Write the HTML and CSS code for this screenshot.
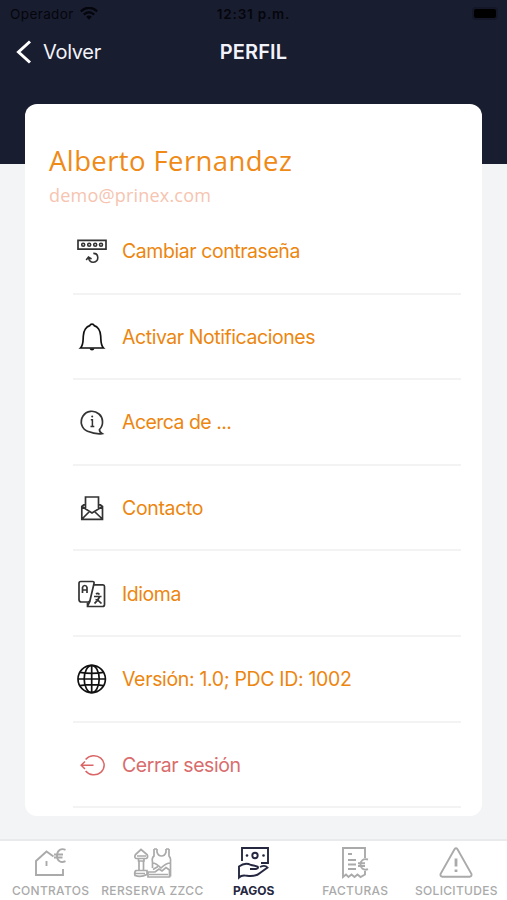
FILE: index.html
```html
<!DOCTYPE html>
<html lang="es">
<head>
<meta charset="utf-8">
<title>Perfil</title>
<link rel="stylesheet" href="styles.css">
</head>
<body>
<div class="app">
  <header class="top">
    <div class="status">
      <div class="carrier"><span>Operador</span>
        <svg width="18" height="13" viewBox="0 0 18 13" fill="none" stroke="#05060c" stroke-width="2.3"><path d="M.8 4.300Q9-2.800 17.200 4.300M3.800 7.600Q9 3 14.200 7.600"/><path d="M6.200 9.800Q9 7.300 11.800 9.800L9 12.700Z" fill="#05060c" stroke="none"/></svg>
      </div>
      <time class="clock">12:31 p.m.</time>
      <span class="battery"></span>
    </div>
    <nav class="nav">
      <a class="back"><svg width="16" height="24" viewBox="0 0 16 24" fill="none" stroke="#fff" stroke-width="3"><path d="M14 1.5L2.500 12L14 22.500"/></svg><span>Volver</span></a>
      <h1 class="title">PERFIL</h1>
    </nav>
  </header>
  <main class="card">
    <h2 class="name">Alberto Fernandez</h2>
    <p class="mail">demo@prinex.com</p>
    <ul class="menu">
      <li class="row"><svg class="icon" viewBox="0 0 32 32"><path d="M2 5.300H30V14.200H2Z" stroke-width="1.700"/><g stroke-width="1.600"><circle cx="7.200" cy="9.800" r="1.500"/><circle cx="13.200" cy="9.800" r="1.500"/><circle cx="19.200" cy="9.800" r="1.500"/><circle cx="25" cy="9.800" r="1.500"/></g><path d="M17.300 18.400C23 18.200 23.500 26.600 17.500 27.200C14.800 27.500 12.800 25.600 12.700 23M10.200 25L12.500 22L15.500 24" stroke-width="1.600"/></svg><span class="label">Cambiar contraseña</span></li>
      <li class="row"><svg class="icon dark" viewBox="0 0 32 32"><path d="M4.500 27C7.500 24 7 19.500 7.300 15C7.600 9.500 10.500 5.500 13.800 4.600C14.500 2.500 17.500 2.500 18.200 4.600C21.500 5.500 24.400 9.500 24.700 15C25 19.500 24.500 24 27.500 27Z"/><path d="M13.500 27.500H18.500Q18 29.500 16 29.500T13.500 27.500Z" fill="#111" stroke="none"/></svg><span class="label">Activar Notificaciones</span></li>
      <li class="row"><svg class="icon" viewBox="0 0 32 32"><path d="M23.500 23.500C28 19 27.200 11.500 23 8C18 3.600 10.500 4.600 7 10C3.500 15.500 5.500 23 11.500 25.300C16 27 20.500 28.500 26 27.600Q23.300 26 23.500 23.500Z"/><path d="M14.800 13.800H16.400V20.500M14.500 20.500H18.300" stroke-width="1.500"/><circle cx="16.200" cy="10.600" r="1" fill="#333" stroke="none"/></svg><span class="label tight">Acerca de ...</span></li>
      <li class="row"><svg class="icon" viewBox="0 0 32 32"><path d="M9.500 17V5H22.500V17M9.500 11.500L5.800 14.500V27.300H26.500V14.500L22.500 11.500M5.800 14.500L16 21L26.500 14.500M6 27L13.500 19.500M26.300 27L18.500 19.500"/></svg><span class="label loose">Contacto</span></li>
      <li class="row"><svg class="icon" viewBox="0 0 32 32"><path d="M4.700 3.500H16.500Q18.500 3.500 18 5.500L14 22.500Q13.700 24 12 24H5.500Q3 24 3 21.500V5.500Q3 3.500 4.700 3.500Z"/><path d="M17.700 6.800H27Q28.500 6.800 28.500 8.500V26.500Q28.500 28.500 26.500 28.500H11.500V24.500M14 23L11.500 28M6.500 15V9.500Q7 7.500 8.800 7.500T11 9.500V15M6.500 12H11M18 18.500H25.500M20 16Q21.700 14.600 23.500 16.500M23.500 19Q21.500 23 18.500 25.500M19.500 21.500Q22.500 22 25.500 25.500"/></svg><span class="label">Idioma</span></li>
      <li class="row"><svg class="icon dark" viewBox="0 0 32 32"><circle cx="15.700" cy="16" r="13.700"/><ellipse cx="15.700" cy="16" rx="7.500" ry="13.700"/><path d="M15.700 2.300V29.700M2 16H29.400M4 9.300Q15.700 11.300 27.400 9.300M4 22.700Q15.700 20.700 27.400 22.700"/></svg><span class="label loose">Versión: 1.0; PDC ID: 1002</span></li>
      <li class="row logout"><svg class="icon red" viewBox="0 0 32 32"><path d="M9.600 10.500A10.300 9.600 0 1 1 9.600 22M5.200 16.200H17.500M9 12.500L5.200 16.200L9 20"/></svg><span class="label">Cerrar sesión</span></li>
    </ul>
  </main>
  <footer class="tabs">
    <a class="tab"><svg class="ticon" viewBox="0 0 36 36"><path d="M21.500 12.500L14.500 7.500L4 17V31H31V25M14.500 17V22" /><path d="M33.500 5.800C29 3.800 25 6.500 25 11.800S29 19.200 33.500 17.200M22 10.500H31M22 13.500H30.500"/></svg><span class="tlabel narrow">CONTRATOS</span></a>
    <a class="tab"><svg class="ticon wide" viewBox="0 0 42 36"><path d="M10 5.500L4.500 10.500Q3 13.500 5 14.500H15.500Q17.500 13.500 16 10.500ZM6 12H15M7.500 14.500V17H13V14.500M8 17V26M12.500 17V26M5 26.500H16V30.500Q10 33.500 4 31.500Q3 28 5 26.500ZM4 29.500H14"/><path d="M23 5V12Q20.500 14 21.500 18V24M26 5V8Q27 12 30.500 12T35 8V5M38 5V12Q40 14 39.500 18V32.500M23 5H26M35 5H38M21.500 19Q25 19 30 24Q35 19 39.500 19"/><path d="M17 33H38.500V26L35 23.500L31 27L28 25L24 28H17ZM18 30.500H37M22 25.500L27 22.500"/></svg><span class="tlabel">RERSERVA ZZCC</span></a>
    <a class="tab active"><svg class="ticon" viewBox="0 0 36 36"><path d="M7 17V4H33V19H26"/><circle cx="20" cy="11.500" r="2.700"/><circle cx="12" cy="11.500" r="1.300" fill="currentColor" stroke="none"/><circle cx="28.500" cy="11.500" r="1.300" fill="currentColor" stroke="none"/><path d="M15 25H21C24 24.500 23.500 22.500 21.500 22.200L16 21C12 19 8 19.500 4 22.500V33.500C7 30.500 9 31.500 12 31.800C18 32.500 22 32 25 29L32.500 23.500Q30 20.500 25 23"/></svg><span class="tlabel">PAGOS</span></a>
    <a class="tab"><svg class="ticon" viewBox="0 0 36 36"><path d="M28 14V4H6V33L9 30.500L11.500 33L14.500 30.500L17.500 33L20.500 30.500L23.500 33L28 30.500V27M11 10H15M11 16H19M11 20.500H19M11 25H19"/><path d="M31 15.500C26 14 23.500 17 23.500 20.500S26.500 27 31 25.200M21 19.200H28M21 22H28"/></svg><span class="tlabel narrow">FACTURAS</span></a>
    <a class="tab"><svg class="ticon" viewBox="0 0 36 36"><path d="M16.500 5.200Q18 3.200 19.500 5.200L33.500 30Q34 32.500 31.500 32.700H4.500Q2 32.500 2.500 30Z"/><path d="M18 14.500V22.500M18 25.500V28" stroke-width="2.800"/></svg><span class="tlabel narrow">SOLICITUDES</span></a>
  </footer>
</div>
</body>
</html>
```
FILE: styles.css
```css
* { box-sizing: border-box; }
body { margin: 0; font-family: Inter, "Liberation Sans", sans-serif; }
h1, h2, p, ul { margin: 0; padding: 0; font-weight: 400; }
svg { display: block; fill: none; flex: none; }
.app { width: 507px; height: 900px; display: flex; flex-direction: column; background: #f3f4f6; overflow: hidden; }
.top { height: 164px; flex: none; background: #191d30; }
.status { height: 27px; padding: 0 10px; display: grid; grid-template-columns: 1fr auto 1fr; align-items: center; color: #05060c; font-size: 13.500px; }
.carrier { display: flex; align-items: center; gap: 6px; letter-spacing: .4px; }
.clock { font-weight: 600; letter-spacing: .8px; }
.battery { justify-self: end; width: 22px; height: 9px; margin-right: 1px; border-radius: 2px; background: #000; box-shadow: 0 0 0 2px #141727; }
.nav { height: 50px; padding: 0 16px; display: grid; grid-template-columns: 1fr auto 1fr; align-items: center; color: #f2f3fa; }
.back { display: flex; align-items: center; gap: 11px; font-size: 20px; letter-spacing: -.3px; }
.title { font-size: 20px; font-weight: 600; letter-spacing: .1px; }
.card { width: 457px; height: 712px; margin: -60.500px 0 0 25px; padding-top: 40px; flex: none; background: #fff; border-radius: 12px; overflow: hidden; }
.name { height: 34px; padding-left: 24px; font: 400 27.500px/34px "Open Sans", sans-serif; letter-spacing: .4px; color: #ef8a16; white-space: nowrap; }
.mail { height: 31px; padding: 5px 0 0 24px; font: 400 18px/24px "Open Sans", sans-serif; letter-spacing: .2px; color: #f6c4b0; white-space: nowrap; }
.menu { list-style: none; margin: .5px 21px 0 48px; }
.row { height: 85.600px; padding: 1px 0 0 2.500px; display: flex; align-items: center; gap: 14.500px; border-bottom: 2px solid #f3f3f4; color: #ec860f; }
.icon { width: 32px; height: 32px; stroke: #333; stroke-width: 1.700; }
.dark { stroke: #111; }
.red { stroke: #db6565; stroke-width: 1.500; }
.logout { color: #d96c6c; }
.label { font-size: 19.500px; letter-spacing: -.44px; white-space: nowrap; }
.tight { letter-spacing: -.54px; }
.loose { letter-spacing: -.34px; }
.tabs { height: 61px; margin-top: auto; padding: 6px 0 0; flex: none; display: grid; grid-template-columns: repeat(5, 1fr); background: #fff; border-top: 2px solid #e9eaec; }
.tab { display: flex; flex-direction: column; align-items: center; color: #aaa; }
.ticon { width: 36px; height: 36px; margin: -3px 1px 3px 0; stroke: currentColor; stroke-width: 1.900; }
.wide { width: 42px; stroke-width: 1.700; }
.tlabel { font-size: 12px; line-height: 16px; font-weight: 500; letter-spacing: .4px; white-space: nowrap; }
.narrow { letter-spacing: .3px; }
.active { color: #252840; }
.active .ticon { margin-right: 2px; }
.active .tlabel { margin-right: 1px; font-weight: 700; letter-spacing: 0; }
```
